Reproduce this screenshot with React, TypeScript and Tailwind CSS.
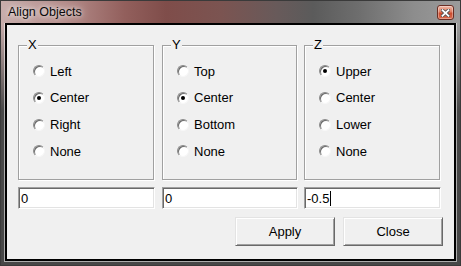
import React from "react";

function Radio({ checked }: { checked: boolean }) {
  return (
    <span className="w-[12px] h-[12px] shrink-0 rounded-full bg-white border border-t-[#8a8a8a] border-l-[#8a8a8a] border-r-[#f6f6f6] border-b-[#f6f6f6] shadow-[inset_1px_1px_0_#6a6a6a] flex items-center justify-center">
      {checked && <span className="w-[4px] h-[4px] rounded-full bg-black" />}
    </span>
  );
}

function Group({
  label,
  options,
  selected,
  w,
}: {
  label: string;
  options: string[];
  selected: number;
  w: string;
}) {
  return (
    <div
      className={`relative ${w} h-[135px] border border-[#a0a0a0] shadow-[inset_1px_1px_0_#ffffff,1px_1px_0_#ffffff] pt-[12px] pl-[14px] flex flex-col`}
    >
      <span className="absolute left-[8px] top-[-9px] px-[1px] bg-[#f0f0f0] text-[13px] leading-[16px]">
        {label}
      </span>
      {options.map((o, i) => (
        <div key={o} className="h-[26.67px] flex items-center gap-[5px]">
          <Radio checked={i === selected} />
          <span className="text-[13px] leading-[15px]">{o}</span>
        </div>
      ))}
    </div>
  );
}

function Field({ value, w, caret }: { value: string; w: string; caret?: boolean }) {
  return (
    <div
      className={`${w} h-[22px] bg-white border border-t-[#a0a0a0] border-l-[#a0a0a0] border-r-white border-b-white shadow-[inset_1px_1px_0_#696969,inset_-1px_-1px_0_#e3e3e3] flex items-center pl-[2px] text-[13px] leading-[15px]`}
    >
      <span>{value}</span>
      {caret && <span className="w-px h-[15px] bg-black ml-[1px]" />}
    </div>
  );
}

function Button({ label }: { label: string }) {
  return (
    <div className="w-[100px] h-[29px] bg-[#f0f0f0] border border-t-[#e3e3e3] border-l-[#e3e3e3] border-r-[#696969] border-b-[#696969] shadow-[inset_1px_1px_0_#ffffff,inset_-1px_-1px_0_#a0a0a0] flex items-center justify-center text-[13px] leading-[15px] pb-[1px]">
      {label}
    </div>
  );
}

export default function App() {
  return (
    <div className="w-[461px] h-[266px] border border-[#3a3a3a] flex flex-col font-['Liberation_Sans',Arial,sans-serif] text-black bg-[linear-gradient(to_bottom,rgba(71,71,71,0)_0px,rgba(71,71,71,0)_24px,rgba(71,71,71,1)_110px),linear-gradient(to_right,#c7adab_0%,#b48c8a_14%,#925f5c_27%,#7f4d4a_36%,#7b5451_48%,#685a5a_60%,#5b5b5b_68%,#6e6e6e_78%,#8d8d8d_90%,#9b9b9b_100%)]">
      {/* Title bar */}
      <div className="h-[22px] flex items-center justify-between pl-[7px] pr-[6px]">
        <span className="text-[12.5px] leading-[16px] text-[#0a0a0a] [text-shadow:0_0_8px_rgba(255,255,255,0.9),0_0_4px_rgba(255,255,255,0.7)]">
          Align Objects
        </span>
        <div className="self-start mt-[4px] w-[17px] h-[15px] rounded-[3px] border border-[#6a2e24] bg-[linear-gradient(to_bottom,#efb8a6_0%,#e07d62_45%,#cc4a2c_55%,#d86c4e_100%)] shadow-[inset_0_0_0_1px_rgba(255,255,255,0.35)] flex items-center justify-center">
          <svg width="9" height="8" viewBox="0 0 9 8">
            <path d="M1.5 1.2 L7.5 6.8 M7.5 1.2 L1.5 6.8" stroke="#505050" strokeWidth="3.4" strokeLinecap="square" />
            <path d="M1.5 1.2 L7.5 6.8 M7.5 1.2 L1.5 6.8" stroke="#ffffff" strokeWidth="1.8" strokeLinecap="square" />
          </svg>
        </div>
      </div>
      {/* Frame + client */}
      <div className="flex-1 mx-[3px] mb-[3px] border border-t-0 border-[rgba(255,255,255,0.55)] flex">
        <div className="flex-1 border-2 border-black bg-[#f0f0f0] pt-[20px] pl-[11px] flex flex-col">
          <div className="flex">
            <Group label="X" options={["Left", "Center", "Right", "None"]} selected={1} w="w-[136px]" />
            <div className="ml-[8px]">
              <Group label="Y" options={["Top", "Center", "Bottom", "None"]} selected={1} w="w-[135px]" />
            </div>
            <div className="ml-[7px]">
              <Group label="Z" options={["Upper", "Center", "Lower", "None"]} selected={0} w="w-[136px]" />
            </div>
          </div>
          <div className="flex mt-[7px]">
            <Field value="0" w="w-[137px]" />
            <div className="ml-[7px]">
              <Field value="0" w="w-[136px]" />
            </div>
            <div className="ml-[6px]">
              <Field value="-0.5" w="w-[137px]" caret />
            </div>
          </div>
          <div className="flex justify-end gap-2 pr-[11px] mt-[8px]">
            <Button label="Apply" />
            <Button label="Close" />
          </div>
        </div>
      </div>
    </div>
  );
}
